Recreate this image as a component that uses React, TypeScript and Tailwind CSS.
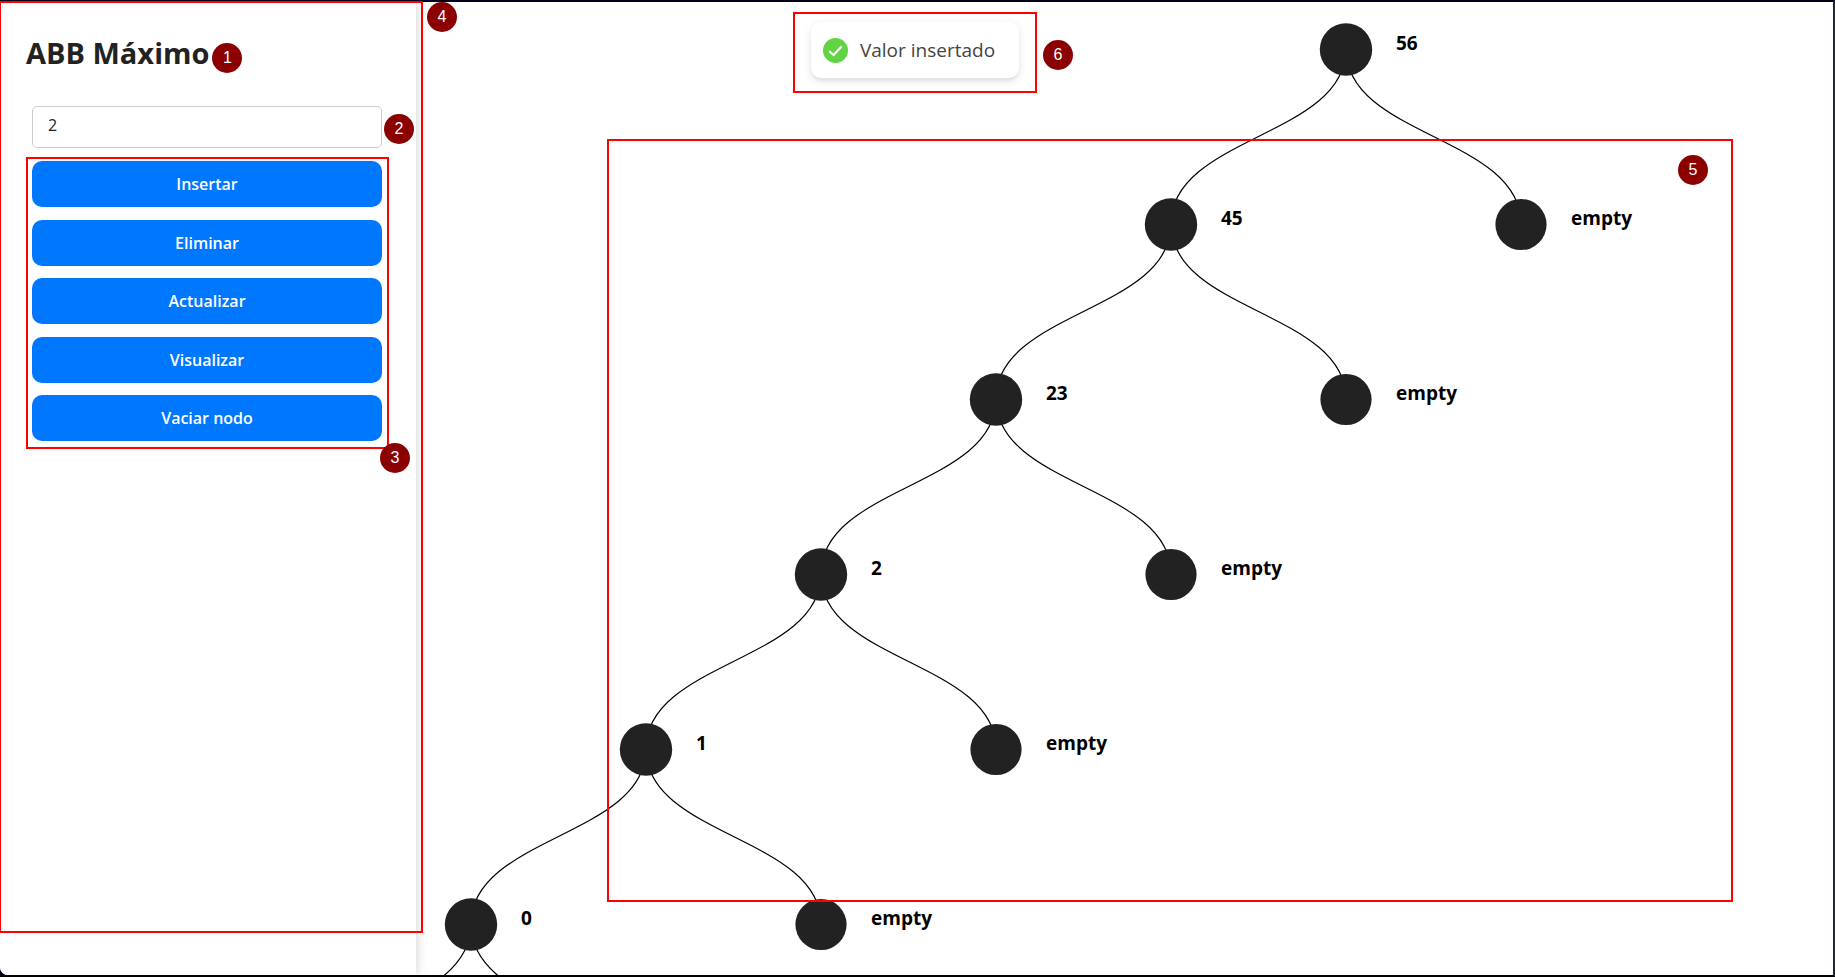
import { useState, type ReactNode } from "react";

const STEP = 175;
const ORIGIN = { x: 930, y: 47 };

type TreeNode = { label: string; col: number; row: number; leaf: boolean };

const NODES: TreeNode[] = [
  { label: "56", col: 0, row: 0, leaf: false },
  { label: "45", col: -1, row: 1, leaf: false },
  { label: "empty", col: 1, row: 1, leaf: true },
  { label: "23", col: -2, row: 2, leaf: false },
  { label: "empty", col: 0, row: 2, leaf: true },
  { label: "2", col: -3, row: 3, leaf: false },
  { label: "empty", col: -1, row: 3, leaf: true },
  { label: "1", col: -4, row: 4, leaf: false },
  { label: "empty", col: -2, row: 4, leaf: true },
  { label: "0", col: -5, row: 5, leaf: false },
  { label: "empty", col: -3, row: 5, leaf: true },
];

const ACTIONS = ["Insertar", "Eliminar", "Actualizar", "Visualizar", "Vaciar nodo"];

function place(node: TreeNode) {
  return { x: ORIGIN.x + node.col * STEP, y: ORIGIN.y + node.row * STEP };
}

function edge(x: number, y: number, dir: number) {
  const mid = y + STEP / 2;
  const tx = x + dir * STEP;
  return `M${x},${y}C${x},${mid} ${tx},${mid} ${tx},${y + STEP}`;
}

function Tree() {
  return (
    <svg className="block h-full w-full" role="img" aria-label="Árbol binario de búsqueda">
      <g fill="none" stroke="#000" strokeWidth="1.2">
        {NODES.filter((n) => !n.leaf).map((n) => {
          const { x, y } = place(n);
          return (
            <g key={n.label}>
              <path d={edge(x, y, -1)} />
              <path d={edge(x, y, 1)} />
            </g>
          );
        })}
      </g>
      {NODES.map((n) => {
        const { x, y } = place(n);
        return (
          <g key={`${n.col}:${n.row}`}>
            <circle cx={x} cy={y + 0.5} r={n.leaf ? 25.6 : 26.2} fill="#222" />
            <text x={x + 50} y={y + 1} className="fill-black text-[19px] font-bold">
              {n.label}
            </text>
          </g>
        );
      })}
    </svg>
  );
}

function Marker({ n, className }: { n: number; className: string }) {
  return (
    <span
      className={`flex size-[30px] shrink-0 items-center justify-center rounded-full bg-[#8b0000] font-['Liberation_Sans',Arial,sans-serif] text-base font-normal text-white ${className}`}
    >
      {n}
    </span>
  );
}

function Frame({ className, children }: { className: string; children?: ReactNode }) {
  return (
    <div className={`pointer-events-none absolute border-2 border-[#f00] ${className}`}>{children}</div>
  );
}

function Toast() {
  return (
    <div className="pointer-events-none absolute inset-x-0 top-[10px] z-20 flex justify-center pr-[3px]">
      <div className="relative w-[244px] border-2 border-[#f00] px-4 pt-2 pb-[13px]">
        <div
          role="status"
          className="flex h-14 items-center justify-center gap-3 rounded-[10px] bg-white pr-3 whitespace-nowrap shadow-[0_3px_10px_rgba(0,0,0,0.1),0_3px_3px_rgba(0,0,0,0.05)]"
        >
          <svg className="size-[25px]" viewBox="0 0 25 25" aria-hidden="true">
            <circle cx="12.5" cy="12.5" r="12.5" fill="#61d345" />
            <path d="M6.2 13.2 L10.6 17 L18.6 8.4" fill="none" stroke="#fff" strokeWidth="2.2" />
          </svg>
          <p className="text-[19px] text-[#444]">Valor insertado</p>
        </div>
        <Marker n={6} className="absolute top-[26px] -right-[38px]" />
      </div>
    </div>
  );
}

export default function App() {
  const [value, setValue] = useState("2");

  return (
    <div className="relative h-screen border-t-2 border-r-2 border-b-2 border-t-[#02021a] border-r-[#222635] border-b-black bg-[#02021a] font-['Open_Sans','Noto_Sans',sans-serif]">
      <div className="flex h-full rounded-bl-[8px] bg-white">
        <aside className="relative z-10 w-[416px] shrink-0 rounded-bl-[8px] bg-white px-[26px] pt-[26px] shadow-[0_0_12px_rgba(0,0,0,0.2)]">
          <header className="flex items-end gap-[3px]">
            <h1 className="text-[29px] leading-[50px] font-bold text-[#222]">ABB Máximo</h1>
            <Marker n={1} className="mb-[5px]" />
          </header>
          <form className="mt-7 w-[362px] px-[6px]" onSubmit={(e) => e.preventDefault()}>
            <div className="relative">
              <input
                aria-label="Valor"
                value={value}
                onChange={(e) => setValue(e.target.value)}
                className="block h-[42px] w-full rounded-[5px] border border-[#ccc] px-[15px] pb-1 text-base text-[#222] outline-none"
              />
              <Marker n={2} className="absolute top-2 left-full ml-[2px]" />
            </div>
            <div className="relative mt-[13px] flex h-[280px] flex-col justify-between">
              {ACTIONS.map((action) => (
                <button
                  key={action}
                  type="button"
                  className="h-[46px] rounded-[10px] bg-[#0077ff] text-base font-semibold text-white"
                >
                  {action}
                </button>
              ))}
              <Frame className="-top-1 -right-[7px] -bottom-2 -left-[6px]">
                <Marker n={3} className="absolute -right-[23px] -bottom-[26px]" />
              </Frame>
            </div>
          </form>
          <Frame className="-top-px -right-[7px] bottom-[42px] -left-px">
            <Marker n={4} className="absolute -top-px left-full ml-[6px]" />
          </Frame>
        </aside>
        <main className="relative min-w-0 flex-1">
          <Tree />
          <Frame className="top-[137px] right-[100px] bottom-[73px] left-[191px]">
            <Marker n={5} className="absolute top-[14px] right-[23px]" />
          </Frame>
        </main>
      </div>
      <Toast />
    </div>
  );
}
